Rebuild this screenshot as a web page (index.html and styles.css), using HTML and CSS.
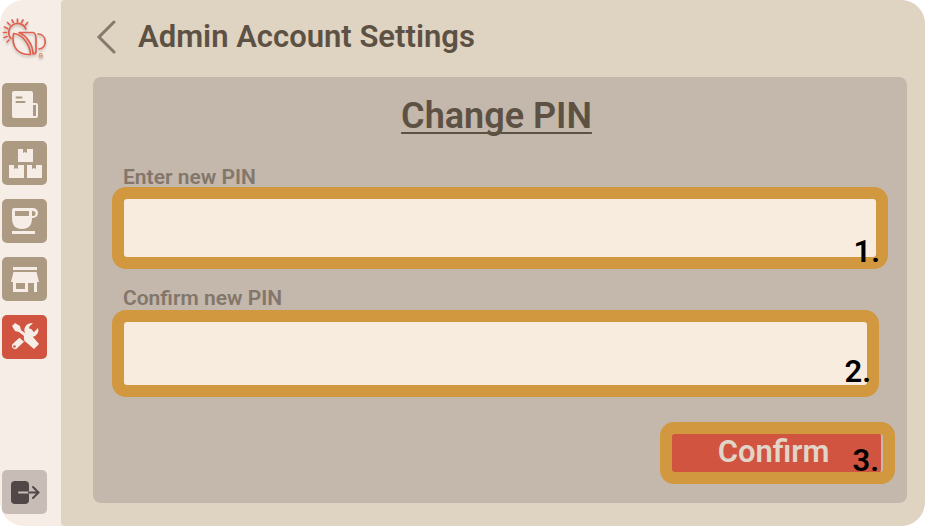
FILE: index.html
```html
<!DOCTYPE html>
<html lang="en">
<head>
<meta charset="utf-8">
<meta name="viewport" content="width=device-width, initial-scale=1">
<title>Admin Account Settings</title>
<link rel="stylesheet" href="styles.css">
</head>
<body>
<div class="app">
  <nav class="sidebar" aria-label="Main">
    <a class="logo" href="#" aria-label="Home">
      <svg viewBox="0 0 46 44" width="46" height="44" fill="none" stroke="#e2604f" stroke-width="1.7" stroke-linecap="round" stroke-linejoin="round">
        <path d="M9 22.500A9 9 0 1 1 24 13"/>
        <path d="M15.500 6V3M11.500 6.500L10 4M8 9L5.500 6.500M5.500 12.500L2.500 11M4.500 16.500H1.500M5 20.500L2 21.500M7 24L5 26M19.500 6.500L21 4M23.500 9L25.500 6.500"/>
        <path d="M11.500 17.500C20 18 28 28 28.500 38.500C16 39 9 31 11.500 17.500Z"/>
        <path d="M17 16.500H31C34 17 34 20 34 23V35Q34 38 31 38C31 29 25 20 17 16.500Z"/>
        <path d="M36 18C45 18 46 32 37 33"/>
        <path d="M38 37.500h2v2h-2zM37.500 39.500h3v1.500h-3z" stroke="#d69a80" stroke-width="1"/>
      </svg>
    </a>
    <a class="tile" href="#" aria-label="Menu">
      <svg viewBox="0 0 44 44" width="44" height="44">
        <path d="M12 8H29Q31 8 31 10V20H34Q36 20 36 22V33Q36 35 34 35H12Q10 35 10 33V10Q10 8 12 8Z" fill="#f5ede6"/>
        <path d="M14.500 14.500H19.500M14.500 19H22.500" stroke="#ac9a82" stroke-width="2" stroke-linecap="round"/>
        <path d="M31 22H34V33H31Z" fill="#ac9a82"/>
      </svg>
    </a>
    <a class="tile" href="#" aria-label="Inventory">
      <svg viewBox="0 0 44 44" width="44" height="44" fill="#f5ede6">
        <path d="M16 8h5v4l2-1 2 1V8h6v13H16zM7 24h5v4l2-1 2 1v-4h6v13H7zM25 24h5v4l2-1 2 1v-4h6v13H25z"/>
      </svg>
    </a>
    <a class="tile" href="#" aria-label="Drinks">
      <svg viewBox="0 0 44 44" width="44" height="44">
        <path d="M12 9H31a5 5 0 0 1 0 10H30C30 26 27 30 20 30S10 26 10 19V11Q10 9 12 9ZM10 32H33V35H10Z" fill="#f5ede6"/>
        <path d="M13 12H27V17H13ZM30 12H31A2.500 2.500 0 0 1 31 17H30Z" fill="#ac9a82"/>
      </svg>
    </a>
    <a class="tile" href="#" aria-label="Store">
      <svg viewBox="0 0 44 44" width="44" height="44">
        <path d="M11 10H35V13H11ZM11.500 15H34.500L37 25H35V35H32V26H26V35H11V25H9Z" fill="#f5ede6"/>
        <path d="M14 26H23V32H14Z" fill="#ac9a82"/>
      </svg>
    </a>
    <a class="tile tile-active" href="#" aria-label="Settings" aria-current="page">
      <svg viewBox="0 0 44 44" width="44" height="44">
        <path d="M13 31L28 17" stroke="#f5ede6" stroke-width="6" stroke-linecap="round"/>
        <path d="M31 8C24 8 21 13 23 18L27 22C32 23 38 19 36 13L32 17L28 16L27 12Z" fill="#f5ede6"/>
        <path d="M10 11L24 24" stroke="#d15441" stroke-width="7"/>
        <path d="M10 11L13 8L18 11L19 15L24 19Q28 18 31 22L37 29L32 34L25 28Q21 25 22 21L17 17L13 16Z" fill="#f5ede6"/>
        <circle cx="12.500" cy="31.500" r="1.300" fill="#d15441"/>
      </svg>
    </a>
    <a class="tile tile-logout" href="#" aria-label="Log out">
      <svg viewBox="0 0 44 44" width="44" height="44" fill="none" stroke-linecap="round">
        <rect x="9" y="11" width="18" height="23" rx="4" fill="#514746"/>
        <path d="M17 22.500H27" stroke="#c8bcb7" stroke-width="2"/>
        <path d="M27 22.500H36M31 17L36.500 22.500L31 28" stroke="#514746" stroke-width="2"/>
      </svg>
    </a>
  </nav>
  <main class="content">
    <header class="heading">
      <a class="back" href="#" aria-label="Back">
        <svg viewBox="0 0 20 34" width="20" height="34" fill="none" stroke="#877a6d" stroke-width="3" stroke-linecap="round"><path d="M18 2L3 17L18 32"/></svg>
      </a>
      <h1>Admin Account Settings</h1>
    </header>
    <form class="panel">
      <h2>Change PIN</h2>
      <label for="new-pin">Enter new PIN</label>
      <div class="frame frame-new">
        <input id="new-pin" type="password">
        <span class="step">1.</span>
      </div>
      <label for="confirm-pin">Confirm new PIN</label>
      <div class="frame frame-repeat">
        <input id="confirm-pin" type="password">
        <span class="step step-raised">2.</span>
      </div>
      <div class="frame frame-submit">
        <button type="button">Confirm</button>
        <span class="step step-inset">3.</span>
      </div>
    </form>
  </main>
</div>
</body>
</html>
```
FILE: styles.css
```css
* {
  box-sizing: border-box;
}

body {
  margin: 0;
  background: #fff;
  font-family: Roboto, "Liberation Sans", sans-serif;
  font-weight: 600;
  color: #5d5144;
}

.app {
  display: flex;
  min-height: 100vh;
  border-radius: 24px;
  overflow: hidden;
  background: #f5ede6;
}

.sidebar {
  flex: none;
  display: flex;
  flex-direction: column;
  gap: 14px;
  width: 61px;
  padding: 16px 0 12px 2px;
}

.logo {
  height: 53px;
  filter: drop-shadow(0 2px 1px #0003);
}

.tile {
  width: 45px;
  height: 44px;
  border-radius: 5px;
  background: #ac9a82;
}

.tile-active {
  background: #d15441;
}

.tile-logout {
  margin-top: auto;
  background: #c8bcb7;
}

svg {
  display: block;
}

.content {
  flex: 1;
  display: flex;
  flex-direction: column;
  padding: 17px 18px 23px 32px;
  border-radius: 4px 0 0 4px;
  background: #dfd3c2;
}

.heading {
  display: flex;
  align-items: center;
  gap: 22px;
  height: 40px;
  margin: 0 0 20px 3px;
}

h1,
h2 {
  margin: 0;
  font-weight: 600;
}

h1 {
  font-size: 31px;
  line-height: 40px;
}

.panel {
  flex: 1;
  display: flex;
  flex-direction: column;
  padding: 19px 12px 19px 19px;
  border-radius: 8px;
  background: #c3b8ab;
}

h2 {
  align-self: center;
  margin: 0 14px 31px 0;
  font-size: 36px;
  line-height: 40px;
  text-decoration: underline;
  text-decoration-thickness: 2px;
  text-underline-offset: 4px;
  text-decoration-skip-ink: none;
}

label {
  margin-left: 11px;
  font-size: 21px;
  line-height: 20px;
  color: #83766a;
}

.frame {
  position: relative;
  display: flex;
  border: 12px solid #d1983f;
  border-radius: 14px;
  background: #d1983f;
}

.frame-new {
  height: 82px;
  margin: 0 7px 19px 0;
}

.frame-repeat {
  height: 87px;
  margin: 2px 16px 25px 0;
}

.frame-submit {
  align-self: flex-end;
  width: 235px;
  height: 62px;
}

input,
button {
  flex: 1;
  min-width: 0;
  border: 0;
  border-radius: 3px;
  font: inherit;
}

input {
  padding: 0 12px;
  background: #f8ecdf;
  font-size: 24px;
}

button {
  padding: 0 6px 2px 0;
  border-right: 2px solid #c3b8ab;
  background: #d15441;
  color: #e1d5c8;
  font-size: 31px;
  line-height: 36px;
}

.step {
  position: absolute;
  right: -4px;
  bottom: -13px;
  font-size: 31px;
  line-height: 36px;
  color: #000;
  pointer-events: none;
}

.step-raised {
  bottom: -5px;
}

.step-inset {
  right: 4px;
  bottom: -7px;
}
```
